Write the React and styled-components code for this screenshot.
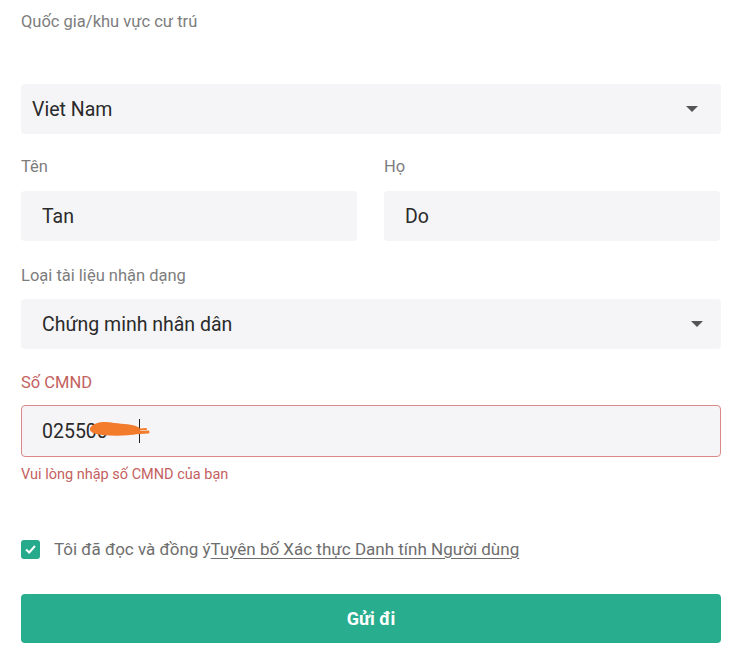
import React from 'react';
import styled, { createGlobalStyle } from 'styled-components';

const GlobalStyle = createGlobalStyle`
  html, body {
    margin: 0;
    padding: 0;
    background: #fff;
    font-family: "Roboto", "Liberation Sans", sans-serif;
  }
`;

const Form = styled.form`
  width: 700px;
  padding: 12px 0 0 21px;
  display: flex;
  flex-direction: column;
`;

const Label = styled.div`
  font-size: 16.5px;
  line-height: 20px;
  color: ${p => (p.error ? '#c4615e' : '#7d7d7d')};
  margin-bottom: ${p => p.gap || 14}px;
`;

const Field = styled.div`
  position: relative;
  height: ${p => p.h || 50}px;
  box-sizing: border-box;
  background: #f5f5f7;
  border: 1px solid ${p => (p.error ? '#d98a86' : 'transparent')};
  border-radius: 4px;
  display: flex;
  align-items: center;
  padding: 0 ${p => p.pr || 22}px 0 ${p => p.pl || 20}px;
  font-size: 19.5px;
  color: #2a2a2a;
  margin-bottom: ${p => p.mb || 0}px;
  justify-content: space-between;
`;

const Row = styled.div`
  display: grid;
  grid-template-columns: 336px 336px;
  column-gap: 27px;
`;

const Col = styled.div`
  display: flex;
  flex-direction: column;
`;

const Caret = styled.span`
  width: 0;
  height: 0;
  border-left: 6px solid transparent;
  border-right: 6px solid transparent;
  border-top: 6px solid #555;
`;

const Value = styled.span`
  display: flex;
  align-items: center;
`;

const Spacer = styled.span`
  display: inline-block;
  width: ${p => p.w}px;
`;

const Cursor = styled.span`
  display: inline-block;
  width: 1px;
  height: 24px;
  background: #222;
`;

const Scribble = styled.svg`
  position: absolute;
  left: 66px;
  top: 13px;
`;

const ErrorText = styled.div`
  font-size: 14.5px;
  color: #c4615e;
  margin-top: 9px;
  line-height: 18px;
`;

const Agree = styled.label`
  display: flex;
  align-items: center;
  margin-top: 55px;
  font-size: 17px;
  color: #6e6e6e;
  gap: 14px;
`;

const Box = styled.span`
  width: 19px;
  height: 19px;
  border-radius: 3px;
  background: #27a98b;
  display: flex;
  align-items: center;
  justify-content: center;
`;

const Link = styled.a`
  color: #6e6e6e;
  text-decoration: underline;
  text-underline-offset: 3px;
`;

const Submit = styled.button`
  margin-top: 35px;
  width: 700px;
  height: 49px;
  border: none;
  border-radius: 4px;
  background: #28ad8e;
  color: #fff;
  font-family: inherit;
  font-size: 18px;
  font-weight: 700;
`;

export default function App() {
  return (
    <>
      <GlobalStyle />
      <Form>
        <Label gap={52}>Quốc gia/khu vực cư trú</Label>
        <Field pl={10} mb={23}>
          <span>Viet Nam</span>
          <Caret />
        </Field>
        <Row>
          <Col>
            <Label gap={14}>Tên</Label>
            <Field>Tan</Field>
          </Col>
          <Col>
            <Label gap={14}>Họ</Label>
            <Field>Do</Field>
          </Col>
        </Row>
        <Label gap={13} style={{ marginTop: 25 }}>Loại tài liệu nhận dạng</Label>
        <Field mb={24} pr={17}>
          <span>Chứng minh nhân dân</span>
          <Caret />
        </Field>
        <Label error gap={12}>Số CMND</Label>
        <Field error h={52}>
          <Value>
            025500<Spacer w={31} />
            <Cursor />
          </Value>
          <Scribble width="64" height="22" viewBox="0 0 64 22">
            <path
              d="M2 9 C6 3, 16 2, 26 4 C36 5, 44 5, 50 8 C53 10, 52 14, 48 15 C40 17, 26 17, 14 16 C6 15, 1 13, 2 9 Z"
              fill="#f37b2c"
            />
            <path d="M44 14 L60 13" stroke="#f37b2c" strokeWidth="3" strokeLinecap="round" />
            <path d="M46 11 L58 10" stroke="#f37b2c" strokeWidth="2" strokeLinecap="round" />
          </Scribble>
        </Field>
        <ErrorText>Vui lòng nhập số CMND của bạn</ErrorText>
        <Agree>
          <Box>
            <svg width="13" height="13" viewBox="0 0 13 13">
              <path d="M2 6.5 L5.2 9.5 L11 3" stroke="#fff" strokeWidth="2" fill="none" />
            </svg>
          </Box>
          <span>
            Tôi đã đọc và đồng ý<Link>Tuyên bố Xác thực Danh tính Người dùng</Link>
          </span>
        </Agree>
        <Submit type="button">Gửi đi</Submit>
      </Form>
    </>
  );
}
